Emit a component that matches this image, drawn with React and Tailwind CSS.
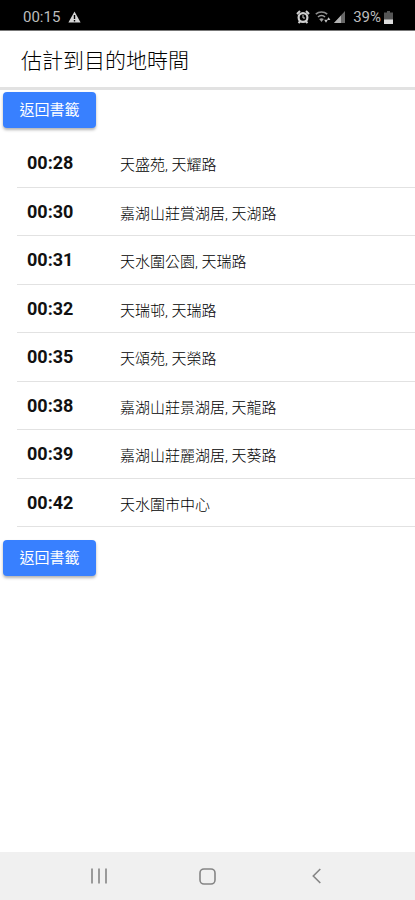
const stops = [
  ["00:28", "天盛苑, 天耀路"],
  ["00:30", "嘉湖山莊賞湖居, 天湖路"],
  ["00:31", "天水圍公園, 天瑞路"],
  ["00:32", "天瑞邨, 天瑞路"],
  ["00:35", "天頌苑, 天榮路"],
  ["00:38", "嘉湖山莊景湖居, 天龍路"],
  ["00:39", "嘉湖山莊麗湖居, 天葵路"],
  ["00:42", "天水圍市中心"],
];

function StatusBar() {
  return (
    <div className="flex h-[31px] items-center justify-between border-b border-[#777] bg-black pt-1 pr-[22px] pl-[23px] text-[15px] text-[#bdbdbd]">
      <div className="flex items-center gap-2">
        <span>00:15</span>
        <svg width="13" height="12" viewBox="0 0 13 12" aria-hidden="true">
          <path d="M6.5 0.5 12.6 11.5H0.4Z" fill="#d6d6d6" />
          <path d="M6.5 4v4M6.5 9v1.4" stroke="#000" strokeWidth="1.4" />
        </svg>
      </div>
      <div className="flex items-center">
        <svg width="14" height="14" viewBox="0 0 14 14" aria-hidden="true">
          <circle cx="7" cy="7.5" r="4.4" fill="none" stroke="#cfcfcf" strokeWidth="2.2" />
          <path d="M1 4 4 1M13 4 10 1M2.5 13l2-2M11.5 13l-2-2" stroke="#cfcfcf" strokeWidth="2" />
          <path d="M7 5v3h2" fill="none" stroke="#cfcfcf" strokeWidth="1" />
        </svg>
        <svg className="ml-[5px]" width="16" height="14" viewBox="0 0 16 14" aria-hidden="true">
          <path d="M0.800 4.200C4 1.300 9 1.300 12.200 4.200" fill="none" stroke="#8c8c8c" strokeWidth="1.600" />
          <path d="M3 7C5 5 8 5 10 7" fill="none" stroke="#9c9c9c" strokeWidth="1.600" />
          <path d="M4.200 9Q6.500 7.400 8.800 9L6.500 12Z" fill="#9c9c9c" />
          <path d="M9.200 9.800h3.600L11 12.800ZM11.800 10h3.600L13.600 7.200Z" fill="#c4c4c4" />
        </svg>
        <svg className="ml-[3px]" width="11" height="12" viewBox="0 0 11 12" aria-hidden="true">
          <path d="M0 12 11 0V12Z" fill="#686868" />
          <path d="M0 12 7 4.400V12Z" fill="#b2b2b2" />
        </svg>
        <span className="mr-[3px] ml-2">39%</span>
        <svg width="9" height="13" viewBox="0 0 9 13" aria-hidden="true">
          <path d="M3 0h3v1.500h3V13H0V1.500h3Z" fill="#555" />
          <path d="M0 8.500h9V13H0Z" fill="#ddd" />
        </svg>
      </div>
    </div>
  );
}

function BackButton() {
  return (
    <button
      type="button"
      className="flex h-9 w-[93px] items-center justify-center rounded bg-[#3880ff] text-[15px] text-white shadow-[0_2px_3px_rgba(0,0,0,0.3)]"
    >
      返回書籤
    </button>
  );
}

function NavigationBar() {
  return (
    <nav className="flex h-12 items-center justify-around bg-[#f0f0f0] px-11 text-[#858585]">
      <button type="button" aria-label="最近使用" className="flex w-6 justify-center">
        <svg width="16" height="16" viewBox="0 0 16 16">
          <path d="M1 0.500v15M8 0.500v15M15 0.500v15" stroke="currentColor" strokeWidth="1.600" />
        </svg>
      </button>
      <button type="button" aria-label="主畫面" className="flex w-6 justify-center">
        <svg width="17" height="17" viewBox="0 0 17 17">
          <rect x="1" y="1" width="15" height="15" rx="4" fill="none" stroke="currentColor" strokeWidth="1.600" />
        </svg>
      </button>
      <button type="button" aria-label="返回" className="flex w-6 justify-center">
        <svg width="9" height="16" viewBox="0 0 9 16">
          <path d="M8.300 1 1.300 8l7 7" fill="none" stroke="currentColor" strokeWidth="1.600" />
        </svg>
      </button>
    </nav>
  );
}

export default function App() {
  return (
    <div className="flex min-h-screen flex-col bg-white font-[Roboto,'Noto_Sans_CJK_TC',sans-serif]">
      <StatusBar />
      <header className="flex h-[59px] items-center border-b-3 border-[#e2e2e2] px-[21px] pt-1">
        <h1 className="text-[21px] leading-7 font-light text-black">估計到目的地時間</h1>
      </header>
      <main className="flex-1 px-[3px] pt-[2px]">
        <BackButton />
        <ul className="mt-[11px] -mr-[3px] mb-[13px] ml-[14px]">
          {stops.map(([time, place]) => (
            <li
              key={time}
              className="flex items-center border-b border-[#e2e2e2] pl-[10px] odd:h-[49px] even:h-12"
            >
              <time className="w-[93px] text-lg leading-6 font-bold text-[#111]">{time}</time>
              <span className="pt-1 text-[15px] leading-5 font-light text-black">{place}</span>
            </li>
          ))}
        </ul>
        <BackButton />
      </main>
      <NavigationBar />
    </div>
  );
}
